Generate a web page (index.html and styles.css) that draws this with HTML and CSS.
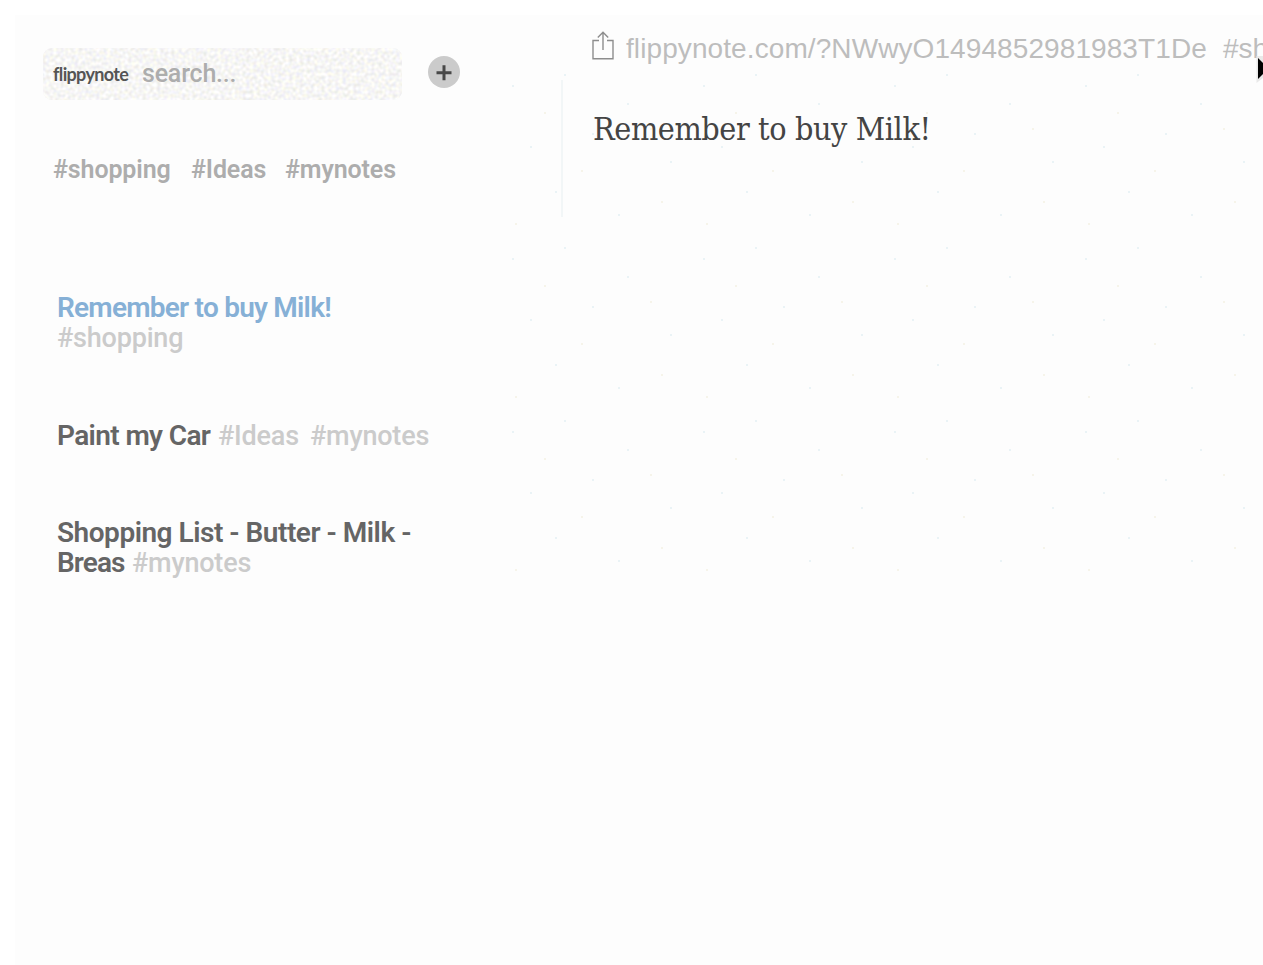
FILE: index.html
```html
<!DOCTYPE html>
<html lang="en">
<head>
<meta charset="utf-8">
<title>flippynote</title>
<link rel="stylesheet" href="styles.css">
</head>
<body>
<div class="app">
  <svg class="specks" width="763" height="520" aria-hidden="true">
    <defs><pattern id="specks" width="191" height="173" patternUnits="userSpaceOnUse">
      <g fill="#eaf3f6"><rect x="12" y="20" width="2" height="2"/><rect x="64" y="9" width="2" height="2"/><rect x="127" y="38" width="2" height="2"/><rect x="30" y="81" width="2" height="2"/><rect x="92" y="68" width="2" height="2"/><rect x="170" y="96" width="2" height="2"/><rect x="55" y="126" width="2" height="2"/><rect x="118" y="149" width="2" height="2"/></g>
      <g fill="#f6f4ea"><rect x="44" y="47" width="2" height="2"/><rect x="150" y="63" width="2" height="2"/><rect x="81" y="105" width="2" height="2"/><rect x="15" y="158" width="2" height="2"/><rect x="161" y="136" width="2" height="2"/></g>
    </pattern></defs>
    <rect width="763" height="520" fill="url(#specks)"/>
  </svg>
  <aside class="sidebar">
    <div class="toolbar">
      <div class="search">
        <svg class="grain" width="359" height="52" aria-hidden="true">
          <filter id="grain" x="0" y="0" width="100%" height="100%" color-interpolation-filters="sRGB">
            <feTurbulence type="fractalNoise" baseFrequency="0.28" numOctaves="1" seed="4"/>
            <feColorMatrix values="0.16 0.05 0 0 0.862  0.16 0 0 0 0.885  0.08 0 0.14 0 0.85  0 0 0 0 1"/>
          </filter>
          <rect width="359" height="52" filter="url(#grain)"/>
        </svg>
        <span class="logo">flippynote</span>
        <span class="placeholder">search...</span>
      </div>
      <svg class="add" width="32" height="32" viewBox="0 0 32 32"><circle cx="16" cy="16" r="16" fill="#cbcbcb"/><path d="M8.5 16.8h15M16 9.2v15" stroke="#484848" stroke-width="3"/></svg>
    </div>
    <nav class="tags"><span class="t-shopping">#shopping</span><span class="t-ideas">#Ideas</span><span class="t-mynotes">#mynotes</span></nav>
    <div class="notes">
      <div class="note active"><div class="line"><b class="n-remember">Remember to buy Milk!</b></div><div class="line"><i class="g-shopping">#shopping</i></div></div>
      <div class="note"><div class="line"><b class="n-paint">Paint my Car</b><i class="g-ideas">#Ideas</i><i class="g-mynotes">#mynotes</i></div></div>
      <div class="note"><div class="line"><b class="n-list">Shopping List - Butter - Milk -</b></div><div class="line"><b class="n-breas">Breas</b><i class="g-mynotes">#mynotes</i></div></div>
    </div>
  </aside>
  <div class="divider"></div>
  <main class="editor">
    <header class="link">
      <svg class="share" width="22" height="29" viewBox="0 0 22 29" fill="none" stroke="#8d8d8d" stroke-width="1.4"><path d="M7 9.5H1v18.3h20V9.5h-6M11 19V1.5M5.8 6.5 11 1.3l5.2 5.2"/></svg>
      <span class="url">flippynote.com/?NWwyO1494852981983T1De</span><span class="hash">#sh</span>
    </header>
    <h1 class="title">Remember to buy Milk!</h1>
  </main>
  <svg class="pointer" width="8" height="32" viewBox="0 0 8 32"><path d="M1.5 2v27l6.5-5V2z" fill="#e9e9e9"/><path d="M3 4v21l5-5V9z" fill="#000"/></svg>
</div>
</body>
</html>
```
FILE: styles.css
```css
body { margin: 0; background: #fff; overflow: hidden; }
.app { position: relative; box-sizing: border-box; width: 1263px; height: 965px; display: flex; overflow: hidden; border-style: solid; border-color: #fff; border-width: 15px 0 0 15px; background: #fdfdfd; font-family: Roboto, "Liberation Sans", sans-serif; white-space: nowrap; }
.specks { position: absolute; right: 0; top: 50px; }
.sidebar { position: relative; width: 546px; flex: none; padding: 33px 0 0 28px; box-sizing: border-box; }
.toolbar { display: flex; align-items: center; gap: 26px; height: 52px; }
.search { position: relative; display: flex; align-items: center; box-sizing: border-box; width: 359px; height: 52px; padding-left: 10px; border-radius: 9px; overflow: hidden; background: #f5f5f3; }
.grain { position: absolute; inset: 0; }
.logo { position: relative; width: 90px; font: 700 18px/24px Lato, sans-serif; letter-spacing: -0.65px; color: #555; }
.placeholder { position: relative; left: -1px; font-size: 25px; line-height: 30px; font-weight: 500; letter-spacing: -0.2px; color: #adadad; }
.add { position: relative; top: -2px; }
.tags { display: flex; gap: 20px; margin: 55px 0 0 10px; height: 30px; line-height: 30px; font-size: 25px; font-weight: 600; letter-spacing: -0.12px; color: #adadad; }
.t-shopping { width: 118px; }
.t-ideas { width: 74px; }
.notes { display: flex; flex-direction: column; gap: 67.5px; margin: 108px 0 0 14px; font-size: 28px; line-height: 30px; color: #656565; }
.line { display: flex; height: 30px; }
.line b { font-weight: 600; }
.n-remember { letter-spacing: -0.76px; }
.n-paint { width: 161px; letter-spacing: -0.62px; }
.n-list { letter-spacing: -0.48px; }
.n-breas { width: 75px; letter-spacing: -0.9px; }
.line i { font-style: normal; font-weight: 500; font-size: 27px; letter-spacing: -0.2px; color: #cbcbcb; }
.line .g-ideas { width: 80px; }
.line i + i { margin-left: 12px; }
.active b { color: #86b0d6; }
.divider { position: relative; width: 2px; height: 137px; margin-top: 65px; flex: none; background: #f2f6f7; }
.editor { position: relative; padding: 16px 0 0 29px; }
.link { display: flex; height: 34px; font: 28px/36px "Liberation Sans", Arial, sans-serif; color: #bdbdbd; }
.url { margin-left: 12px; width: 597px; letter-spacing: 0.09px; }
.title { margin: 44px 0 0 1px; font: 400 32px/40px "DejaVu Serif Condensed", "DejaVu Serif", serif; letter-spacing: -0.4px; color: #444; }
.pointer { position: absolute; left: 1240px; top: 39px; }
```
